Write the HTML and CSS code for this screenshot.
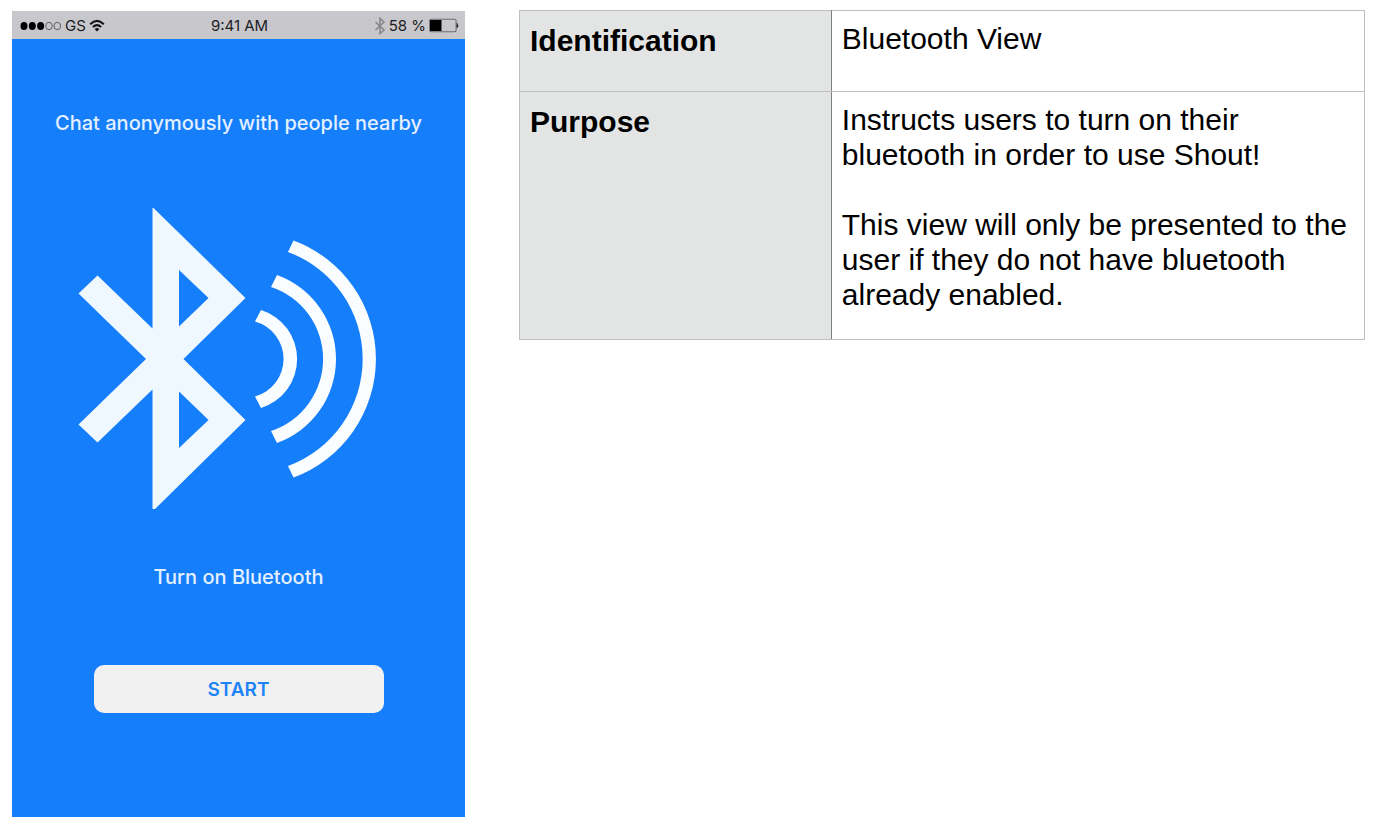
FILE: index.html
```html
<!DOCTYPE html>
<html lang="en">
<head>
<meta charset="utf-8">
<meta name="viewport" content="width=device-width, initial-scale=1">
<title>Bluetooth View</title>
<link rel="stylesheet" href="styles.css">
</head>
<body>
<main class="sheet">
  <section class="phone">
    <header class="status">
      <div class="status-side">
        <svg class="signal" viewBox="0 0 42 10" width="42" height="10" aria-hidden="true">
          <g fill="#000"><ellipse cx="4" cy="5" rx="3.5" ry="4"/><ellipse cx="12.3" cy="5" rx="3.5" ry="4"/><ellipse cx="20.6" cy="5" rx="3.5" ry="4"/></g>
          <g fill="none" stroke="#555" stroke-width=".9"><ellipse cx="29" cy="5" rx="3.3" ry="3.7"/><ellipse cx="37.3" cy="5" rx="3.3" ry="3.7"/></g>
        </svg>
        <span>GS</span>
        <svg class="wifi" viewBox="0 0 16 13" width="16" height="13" aria-hidden="true">
          <g fill="none" stroke="#111" stroke-width="2"><path d="M1.2 5.2Q8 -1.400 14.800 5.200"/><path d="M3.900 8Q8 4.200 12.100 8"/></g>
          <path d="M5.600 10Q8 8 10.400 10L8 12.600Z" fill="#111"/>
        </svg>
      </div>
      <span>9:41 AM</span>
      <div class="status-side status-end">
        <svg viewBox="0 0 12 18" width="12" height="18" aria-hidden="true">
          <path d="M1.500 5L10 13L6 16.500V1.500L10 5L1.500 13" fill="none" stroke="#88888c" stroke-width="1.600"/>
        </svg>
        <span class="percent">58 %</span>
        <svg viewBox="0 0 30 15" width="30" height="15" aria-hidden="true">
          <rect x=".7" y="1.2" width="26.4" height="12.6" rx="1.6" fill="none" stroke="#6d6d70" stroke-width="1.1"/>
          <rect x="1" y="2" width="11.5" height="11" fill="#000"/>
          <path d="M27.600 5H28.400Q30 7.500 28.400 10H27.600Z" fill="#222"/>
        </svg>
      </div>
    </header>
    <div class="screen">
      <p class="tagline">Chat anonymously with people nearby</p>
      <svg class="hero" viewBox="78 208 321 302" width="321" height="302" role="img" aria-label="Bluetooth">
        <path fill="#f0f8ff" fill-rule="evenodd" d="M152.500 208H153.500L245.500 298L183.500 359L245.500 420L155 509H152.500V389.500L97.500 442.500L78.500 424.500L146 359L78.500 293.500L97.500 275.500L152.500 328.500ZM179 270V326.500L208.500 298ZM179 391.500V448L208.500 420Z"/>
        <g fill="#fafdff">
          <path d="M293.500 240.500A126.400 126.400 0 0 1 293.500 477.500L288 466A114 114 0 0 0 288 252Z"/>
          <path d="M277 275A89.300 89.300 0 0 1 277 443L271 431A75.800 75.800 0 0 0 271 287Z"/>
          <path d="M261 310A51.300 51.300 0 0 1 261 408L255 396.500A38.900 38.900 0 0 0 255 321.500Z"/>
        </g>
      </svg>
      <p class="prompt">Turn on Bluetooth</p>
      <button class="start" type="button">START</button>
    </div>
  </section>
  <table class="spec">
    <tbody>
      <tr><th scope="row">Identification</th><td><p>Bluetooth View</p></td></tr>
      <tr>
        <th scope="row">Purpose</th>
        <td>
          <p>Instructs users to turn on their bluetooth in order to use Shout!</p>
          <p>This view will only be presented to the user if they do not have bluetooth already enabled.</p>
        </td>
      </tr>
    </tbody>
  </table>
</main>
</body>
</html>
```
FILE: styles.css
```css
* { box-sizing: border-box; }
body { margin: 0; background: #fff; color: #000; }
p { margin: 0; }

.sheet {
  display: grid;
  grid-template-columns: 453fr 846fr;
  gap: 54px;
  align-items: start;
  padding: 10px 13px 17px 12px;
}

.phone {
  margin-top: 1px;
  background: #157efb;
  font-family: Inter, "Liberation Sans", sans-serif;
}
.status {
  display: grid;
  grid-template-columns: 1fr auto 1fr;
  align-items: center;
  height: 28px;
  padding: 1px 6px 0 8px;
  background: #c8c7cc;
  color: #1c1c1e;
  font-size: 15px;
}
.status-side { display: flex; align-items: center; gap: 3px; }
.status-end { justify-content: flex-end; }

.screen {
  display: flex;
  flex-direction: column;
  align-items: center;
  padding: 72px 16px 104px;
}
.tagline, .prompt {
  color: #e4f0ff;
  font-size: 20px;
  font-weight: 500;
  line-height: 24px;
  text-align: center;
}
.hero { max-width: 100%; margin: 73px 0 55px; }
.start {
  width: 290px;
  max-width: 100%;
  height: 48px;
  margin-top: 76px;
  border: 0;
  border-radius: 10px;
  background: #f1f1f1;
  color: #1f83f8;
  font: 600 19px Inter, "Liberation Sans", sans-serif;
}

.spec {
  width: 100%;
  border-collapse: collapse;
  font-family: "Liberation Sans", Arial, sans-serif;
  font-size: 30px;
  line-height: 35px;
}
.spec th, .spec td {
  border: 1px solid #bfbfbf;
  vertical-align: top;
  text-align: left;
}
.spec th {
  width: 36.9%;
  padding: 12px 10px 33px;
  border-right-color: #808080;
  background: #e3e5e4;
}
.spec td { padding: 10px 10px 27px; border-left-color: #808080; }
.spec p + p { margin-top: 35px; }
```
